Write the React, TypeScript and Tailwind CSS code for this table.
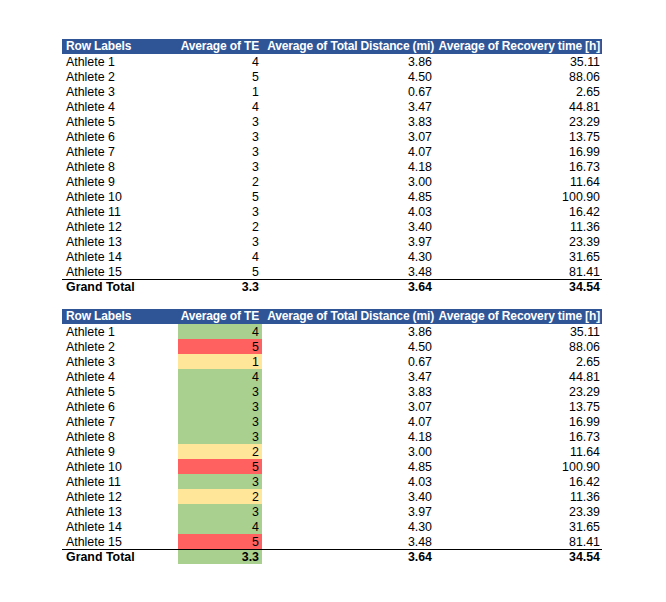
const DATA = [
  { name: "Athlete 1", te: 4, dist: "3.86", rec: "35.11" },
  { name: "Athlete 2", te: 5, dist: "4.50", rec: "88.06" },
  { name: "Athlete 3", te: 1, dist: "0.67", rec: "2.65" },
  { name: "Athlete 4", te: 4, dist: "3.47", rec: "44.81" },
  { name: "Athlete 5", te: 3, dist: "3.83", rec: "23.29" },
  { name: "Athlete 6", te: 3, dist: "3.07", rec: "13.75" },
  { name: "Athlete 7", te: 3, dist: "4.07", rec: "16.99" },
  { name: "Athlete 8", te: 3, dist: "4.18", rec: "16.73" },
  { name: "Athlete 9", te: 2, dist: "3.00", rec: "11.64" },
  { name: "Athlete 10", te: 5, dist: "4.85", rec: "100.90" },
  { name: "Athlete 11", te: 3, dist: "4.03", rec: "16.42" },
  { name: "Athlete 12", te: 2, dist: "3.40", rec: "11.36" },
  { name: "Athlete 13", te: 3, dist: "3.97", rec: "23.39" },
  { name: "Athlete 14", te: 4, dist: "4.30", rec: "31.65" },
  { name: "Athlete 15", te: 5, dist: "3.48", rec: "81.41" },
];

// conditional formatting colours for the TE column
const teColor = (v: number) => {
  if (v >= 5) return "bg-[#ff6161]";
  if (v <= 2) return "bg-[#ffe699]";
  return "bg-[#a9d08e]";
};

const PivotTable = ({ colored }: { colored?: boolean }) => {
  const grid = "grid grid-cols-[116px_84px_175px_165px] h-[15px]";
  return (
    <div className="w-[540px]">
      <div className={`${grid} bg-[#2f5597] text-white font-bold whitespace-nowrap text-[12px] tracking-[-0.15px] leading-[15px]`}>
        <div className="pl-[4px]">Row Labels</div>
        <div className="text-right pr-[3px]">Average of TE</div>
        <div className="text-right pr-[3px]">Average of Total Distance (mi)</div>
        <div className="text-right pr-[2px]">Average of Recovery time [h]</div>
      </div>
      {DATA.map((row) => (
        <div key={row.name} className={`${grid} leading-[14px]`}>
          <div className="pl-[4px] pt-[1px]">{row.name}</div>
          <div className={`text-right pr-[3px] pt-[1px] ${colored ? teColor(row.te) : ""}`}>{row.te}</div>
          <div className="text-right pr-[5px] pt-[1px]">{row.dist}</div>
          <div className="text-right pr-[2px] pt-[1px]">{row.rec}</div>
        </div>
      ))}
      <div className={`${grid} font-bold border-t border-black leading-[14px]`}>
        <div className="pl-[4px]">Grand Total</div>
        <div className={`text-right pr-[3px] ${colored ? "bg-[#a9d08e]" : ""}`}>3.3</div>
        <div className="text-right pr-[5px]">3.64</div>
        <div className="text-right pr-[2px]">34.54</div>
      </div>
    </div>
  );
};

export default function App() {
  return (
    <div className="w-[666px] h-[602px] bg-white pl-[62px] pt-[39px] text-[12.4px] text-black font-['Liberation_Sans',Arial,sans-serif]">
      <div className="flex flex-col gap-[15px]">
        <PivotTable />
        <PivotTable colored />
      </div>
    </div>
  );
}
